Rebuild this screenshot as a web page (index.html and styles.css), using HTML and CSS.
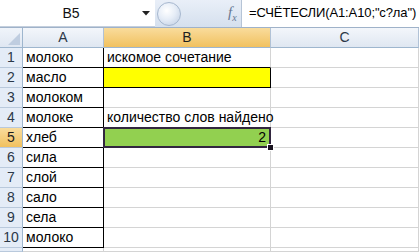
FILE: index.html
```html
<!DOCTYPE html>
<html lang="ru">
<head>
    <meta charset="UTF-8">
    <title>СЧЁТЕСЛИ</title>
    <link rel="stylesheet" href="styles.css">
</head>
<body>
    <!-- Formula bar -->
    <div class="formula-bar">
        <div class="name-box">B5</div>
        <div class="name-arrow">
            <svg width="8" height="5" viewBox="0 0 8 5"><path d="M0 0h8L4 4.5z" fill="#222"/></svg>
        </div>
        <div class="tools">
            <span class="round-btn"></span>
            <span class="fx"><i>f</i><sub>x</sub></span>
        </div>
        <div class="formula-input">=СЧЁТЕСЛИ(A1:A10;"с?ла")</div>
    </div>

    <!-- Sheet -->
    <div class="sheet">
        <div class="corner"><span class="corner-tri"></span></div>
        <div class="col-head">A</div>
        <div class="col-head active">B</div>
        <div class="col-head">C</div>

        <div class="row-head">1</div>
        <div class="cell boxed">молоко</div>
        <div class="cell under">искомое сочетание</div>
        <div class="cell"></div>

        <div class="row-head">2</div>
        <div class="cell boxed">масло</div>
        <div class="cell yellow"></div>
        <div class="cell"></div>

        <div class="row-head">3</div>
        <div class="cell boxed">молоком</div>
        <div class="cell"></div>
        <div class="cell"></div>

        <div class="row-head">4</div>
        <div class="cell boxed">молоке</div>
        <div class="cell">количество слов найдено</div>
        <div class="cell"></div>

        <div class="row-head active">5</div>
        <div class="cell boxed">хлеб</div>
        <div class="cell green selected">2<span class="handle"></span></div>
        <div class="cell"></div>

        <div class="row-head">6</div>
        <div class="cell boxed">сила</div>
        <div class="cell"></div>
        <div class="cell"></div>

        <div class="row-head">7</div>
        <div class="cell boxed">слой</div>
        <div class="cell"></div>
        <div class="cell"></div>

        <div class="row-head">8</div>
        <div class="cell boxed">сало</div>
        <div class="cell"></div>
        <div class="cell"></div>

        <div class="row-head">9</div>
        <div class="cell boxed">села</div>
        <div class="cell"></div>
        <div class="cell"></div>

        <div class="row-head">10</div>
        <div class="cell boxed">молоко</div>
        <div class="cell"></div>
        <div class="cell"></div>

        <div class="row-head"></div>
        <div class="cell"></div>
        <div class="cell"></div>
        <div class="cell"></div>
    </div>
</body>
</html>
```

FILE: styles.css
```css
body {
    margin: 0;
    font-family: "Liberation Sans", Arial, sans-serif;
    font-size: 14px;
    color: #000;
    background: #fff;
    overflow: hidden;
}

/* formula bar */
.formula-bar {
    display: flex;
    height: 27px;
    border-bottom: 1px solid #9fb2c9;
    background: linear-gradient(#e9eff8, #d5e0ee);
}
.name-box {
    flex: 0 0 142px;
    background: #fff;
    border-bottom: 1px solid #c4cfdd;
    text-align: center;
    line-height: 26px;
    color: #111;
}
.name-arrow {
    flex: 0 0 13px;
    background: #fff;
    border-bottom: 1px solid #c4cfdd;
    display: flex;
    align-items: center;
}
.tools {
    flex: 0 0 86px;
    display: flex;
    align-items: center;
}
.round-btn {
    width: 22px;
    height: 22px;
    margin-left: 2px;
    border-radius: 50%;
    border: 1px solid #a7b8cf;
    background: radial-gradient(circle at 40% 35%, #ffffff 0, #e6edf7 45%, #bccbe0 100%);
}
.fx {
    margin-left: 47px;
    font-family: "Liberation Serif", serif;
    font-size: 15px;
    color: #667892;
}
.fx sub {
    font-size: 10px;
    font-style: italic;
}
.formula-input {
    flex: 1;
    min-width: 0;
    background: #fff;
    border-left: 1px solid #b6c4d6;
    line-height: 26px;
    padding-left: 7px;
    font-size: 13px;
    letter-spacing: -0.12px;
    white-space: nowrap;
    overflow: hidden;
}

/* sheet */
.sheet {
    display: grid;
    grid-template-columns: 23px 81px 167px 148px;
    grid-template-rows: repeat(11, 20px) 4px;
    overflow: hidden;
}
.corner {
    background: linear-gradient(#f0f4fa, #dfe7f2);
    border-right: 1px solid #9eb6ce;
    border-bottom: 1px solid #9eb6ce;
    position: relative;
}
.corner-tri {
    position: absolute;
    right: 2px;
    bottom: 2px;
    width: 0;
    height: 0;
    border-left: 12px solid transparent;
    border-bottom: 12px solid #bfcde0;
}
.col-head {
    background: linear-gradient(#f3f6fb, #dfe7f1);
    border-right: 1px solid #b1c2d6;
    border-bottom: 1px solid #9eb6ce;
    text-align: center;
    line-height: 19px;
    color: #2b3848;
}
.row-head {
    background: #e4ecf7;
    border-right: 1px solid #9eb6ce;
    border-bottom: 1px solid #b9c9dc;
    text-align: center;
    line-height: 19px;
    color: #2b3848;
}
.col-head.active,
.row-head.active {
    background: linear-gradient(#f9dc9c, #f1c15f);
    color: #1e1e1e;
}
.cell {
    border-right: 1px solid #d4d4d4;
    border-bottom: 1px solid #d4d4d4;
    line-height: 19px;
    padding-left: 3px;
    white-space: nowrap;
}
.cell.boxed {
    border-right-color: #000;
    border-bottom-color: #000;
}
.cell.under {
    border-bottom-color: #000;
}
.cell.yellow {
    background: #ffff00;
    border-right-color: #000;
    border-bottom-color: #000;
}
.cell.green {
    background: #92d050;
    text-align: right;
    padding-right: 4px;
}
.cell.selected {
    position: relative;
}
.cell.selected::after {
    content: "";
    position: absolute;
    left: -1px;
    top: -1px;
    right: -1px;
    bottom: -1px;
    border: 2px solid #32263f;
}
.handle {
    position: absolute;
    right: -4px;
    bottom: -4px;
    width: 5px;
    height: 5px;
    background: #1a1320;
    border: 1px solid #fff;
    z-index: 2;
}
```
